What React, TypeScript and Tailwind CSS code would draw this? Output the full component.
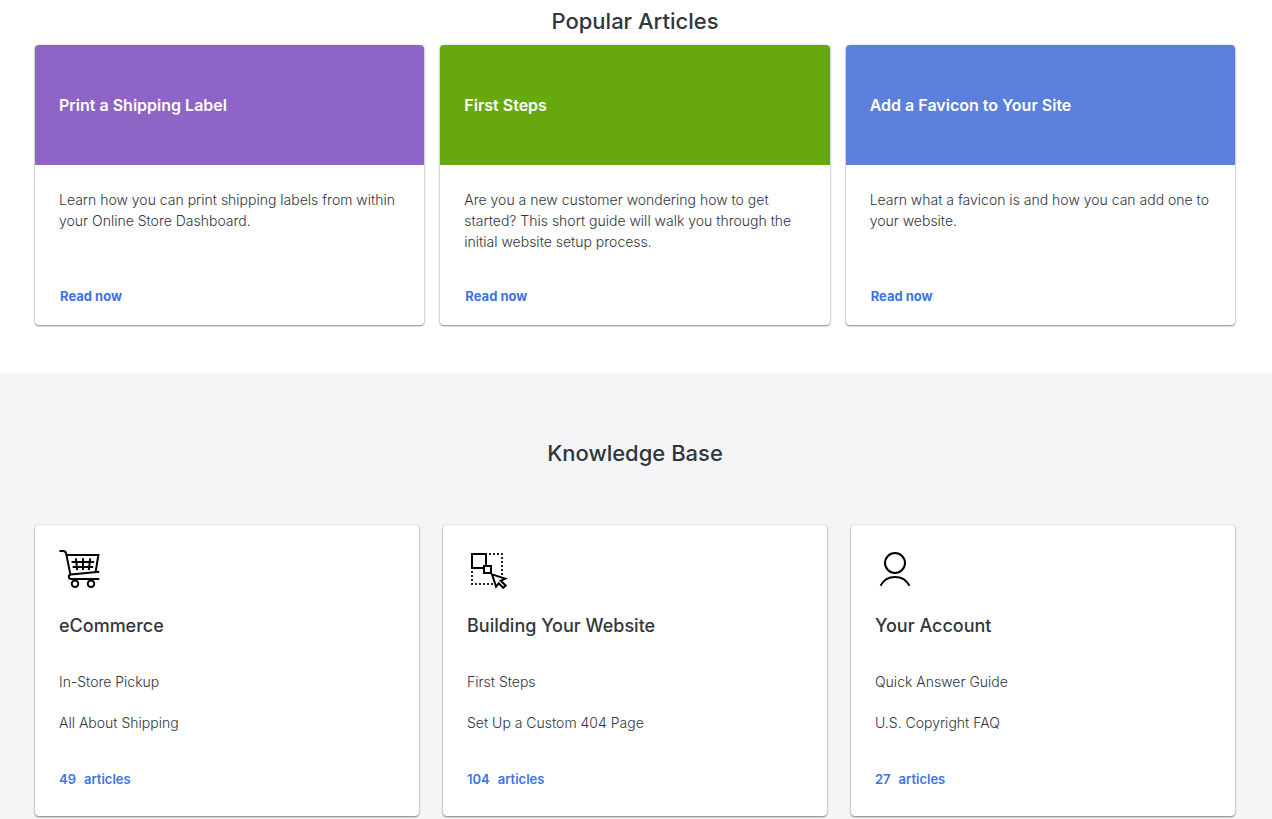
import type { ReactNode } from "react";

type Article = {
    title: string;
    summary: string;
    color: string;
};

type Category = {
    title: string;
    icon: ReactNode;
    links: string[];
    count: number;
};

const popular: Article[] = [
    {
        title: "Print a Shipping Label",
        summary: "Learn how you can print shipping labels from within your Online Store Dashboard.",
        color: "bg-[#8e64c6]",
    },
    {
        title: "First Steps",
        summary:
            "Are you a new customer wondering how to get started? This short guide will walk you through the initial website setup process.",
        color: "bg-[#66a80d]",
    },
    {
        title: "Add a Favicon to Your Site",
        summary: "Learn what a favicon is and how you can add one to your website.",
        color: "bg-[#5b7fda]",
    },
];

const cardShadow = "shadow-[0_1px_2px_rgba(0,0,0,0.45),0_0_2px_rgba(0,0,0,0.2)]";

function CartIcon() {
    return (
        <svg width="42" height="42" viewBox="0 0 42 42" fill="none" stroke="#000" strokeWidth="2" aria-hidden="true">
            <path d="M.5 2h3.6c1.7 0 2.6.8 3 2.4l4.3 21" />
            <path d="M7.6 6h31.8L36.6 23" />
            <path d="M40.3 22.7 11.8 25.6c-2.6.4-2.6 4.4.3 4.4h28.2" />
            <path d="M12.6 13h22.6M13.6 18h20.6M16.9 9.3l1.3 11.8M24 9.3v11.8M31.2 9.3l-1.4 11.8" />
            <circle cx="16" cy="34.8" r="3.3" />
            <circle cx="32" cy="34.8" r="3.3" />
        </svg>
    );
}

function BuildIcon() {
    return (
        <svg width="42" height="42" viewBox="0 0 42 42" fill="none" stroke="#000" strokeWidth="2" aria-hidden="true">
            <path d="M22 5h14M35 8v18M5 22v12M4 35h22" strokeDasharray="2 2" stroke="#222" />
            <path d="M5 5h14v14H5z" fill="#fff" />
            <path d="M17 17h7v7h-7z" fill="#fff" />
            <path d="m25 25.4 13.2 4.2-4.5 2.2 5 4.6-2.5 2.4-4.4-4.6-2.7 3.4z" fill="#fff" />
        </svg>
    );
}

function UserIcon() {
    return (
        <svg width="42" height="42" viewBox="0 0 42 42" fill="none" stroke="#000" strokeWidth="2" aria-hidden="true">
            <circle cx="20" cy="14" r="10" />
            <path d="M5.5 36.8c2.8-5.5 8.2-8.9 14.5-8.9s11.7 3.4 14.5 8.9" />
        </svg>
    );
}

const categories: Category[] = [
    {
        title: "eCommerce",
        icon: <CartIcon />,
        links: ["In-Store Pickup", "All About Shipping"],
        count: 49,
    },
    {
        title: "Building Your Website",
        icon: <BuildIcon />,
        links: ["First Steps", "Set Up a Custom 404 Page"],
        count: 104,
    },
    {
        title: "Your Account",
        icon: <UserIcon />,
        links: ["Quick Answer Guide", "U.S. Copyright FAQ"],
        count: 27,
    },
];

function ArticleCard({ title, summary, color }: Article) {
    return (
        <article className={`flex h-[280px] flex-col overflow-hidden rounded bg-white ${cardShadow}`}>
            <header className={`flex h-[120px] items-center px-6 ${color}`}>
                <h3 className="text-[16px] leading-5 font-semibold text-white">{title}</h3>
            </header>
            <div className="flex flex-1 flex-col justify-between pt-6 pr-5 pb-[18px] pl-6">
                <p className="text-[14px] leading-[21px] font-light">{summary}</p>
                <a href="#" className="self-start px-px text-[13px] leading-[21px] font-bold text-[#3e73e6]">
                    Read now
                </a>
            </div>
        </article>
    );
}

function CategoryCard({ title, icon, links, count }: Category) {
    return (
        <article className={`rounded bg-white px-6 pt-6 pb-[26px] ${cardShadow}`}>
            {icon}
            <h3 className="mt-[22px] text-[18px] leading-[26px] font-medium">{title}</h3>
            <ul className="mt-8 space-y-5 text-[14px] leading-[21px] font-light">
                {links.map((link) => (
                    <li key={link}>
                        <a href="#">{link}</a>
                    </li>
                ))}
            </ul>
            <a href="#" className="mt-9 inline-flex gap-2 text-[13px] leading-[21px] font-semibold text-[#3e73e6]">
                <span>{count}</span>
                <span>articles</span>
            </a>
        </article>
    );
}

export default function App() {
    return (
        <main className="flex min-h-screen flex-col bg-white font-['Inter',sans-serif] text-[#2f373d]">
            <section className="pt-[5px] pr-[37px] pb-12 pl-[35px]">
                <h2 className="text-center text-[22px] leading-8 font-medium">Popular Articles</h2>
                <div className="mt-2 grid grid-cols-3 gap-4">
                    {popular.map((article) => (
                        <ArticleCard key={article.title} {...article} />
                    ))}
                </div>
            </section>

            <section className="flex-1 bg-[#f5f5f8] pt-16 pr-[37px] pl-[35px]">
                <h2 className="text-center text-[22px] leading-8 font-medium">Knowledge Base</h2>
                <div className="mt-14 grid grid-cols-3 gap-6">
                    {categories.map((category) => (
                        <CategoryCard key={category.title} {...category} />
                    ))}
                </div>
            </section>
        </main>
    );
}
